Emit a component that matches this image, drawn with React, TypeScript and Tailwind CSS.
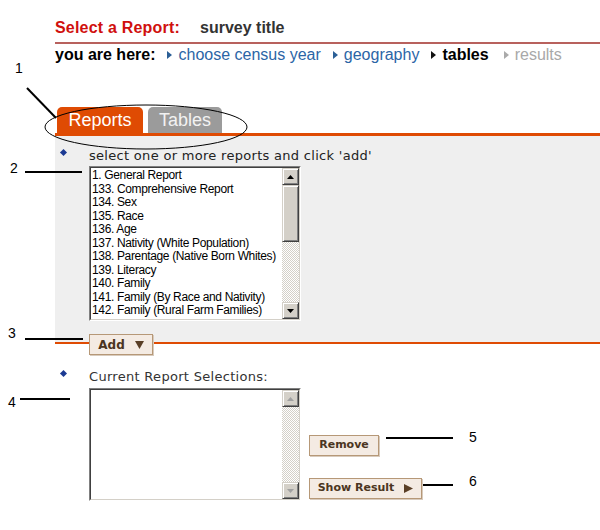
import React from 'react';

const reports = [
  '1. General Report',
  '133. Comprehensive Report',
  '134. Sex',
  '135. Race',
  '136. Age',
  '137. Nativity (White Population)',
  '138. Parentage (Native Born Whites)',
  '139. Literacy',
  '140. Family',
  '141. Family (By Race and Nativity)',
  '142. Family (Rural Farm Families)',
];

function ArrowButton({ dir, disabled }: { dir: 'up' | 'down'; disabled?: boolean }) {
  return (
    <div className="h-[17px] w-[17px] shrink-0 flex items-center justify-center bg-[#d4d0c8] border border-t-[#d4d0c8] border-l-[#d4d0c8] border-r-[#404040] border-b-[#404040] shadow-[inset_1px_1px_#ffffff,inset_-1px_-1px_#808080]">
      <svg width="7" height="4" viewBox="0 0 7 4">
        <path d={dir === 'up' ? 'M3.5 0L7 4H0Z' : 'M0 0H7L3.5 4Z'} fill={disabled ? '#a0a0a0' : '#000000'} />
      </svg>
    </div>
  );
}

function ScrollBar({ disabled }: { disabled?: boolean }) {
  return (
    <div className="w-[17px] h-full flex flex-col">
      <ArrowButton dir="up" disabled={disabled} />
      <div className="flex-1 bg-[image:repeating-conic-gradient(#d4d0c8_0_25%,#ffffff_0_50%)] bg-[length:2px_2px]">
        {!disabled && (
          <div className="h-[57px] w-[17px] bg-[#d4d0c8] border border-t-[#d4d0c8] border-l-[#d4d0c8] border-r-[#404040] border-b-[#404040] shadow-[inset_1px_1px_#ffffff,inset_-1px_-1px_#808080]" />
        )}
      </div>
      <ArrowButton dir="down" disabled={disabled} />
    </div>
  );
}

function ListBox({ items, height, disabled }: { items: string[]; height: string; disabled?: boolean }) {
  return (
    <div className={`w-[212px] ${height} border border-t-[#808080] border-l-[#808080] border-r-[#ffffff] border-b-[#ffffff]`}>
      <div className="w-full h-full flex border border-t-[#404040] border-l-[#404040] border-r-[#d4d0c8] border-b-[#d4d0c8] bg-white">
        <div className="flex-1 overflow-hidden pl-[1px] pt-[1px] font-['Liberation_Sans',Arial,sans-serif] text-[12px] leading-[13.5px] tracking-[-0.35px] text-black">
          {items.map((r) => (
            <div key={r} className="whitespace-nowrap">{r}</div>
          ))}
        </div>
        <ScrollBar disabled={disabled} />
      </div>
    </div>
  );
}

function Crumb({ color, wide }: { color: string; wide?: boolean }) {
  return (
    <svg width="5" height="8" viewBox="0 0 5 8" className={`mr-[6px] ${wide ? 'ml-[15px]' : 'ml-[12px]'}`}>
      <path d="M0 0L5 4L0 8Z" fill={color} />
    </svg>
  );
}

function Bullet() {
  return <div className="w-[5px] h-[5px] rotate-45 bg-[#1b3a93]" />;
}

function BrownButton({ children, width }: { children: React.ReactNode; width: string }) {
  return (
    <div className={`${width} h-[21px] flex items-center justify-center gap-[10px] bg-[#f4ebe3] border border-[#b69877] shadow-[1px_1px_0_#d8cbbd] font-['DejaVu_Sans',Verdana,sans-serif] font-bold text-[11px] text-[#4b3521]`}>
      {children}
    </div>
  );
}

function Callout({ n, numX, numY, x1, x2, y }: { n: string; numX: number; numY: number; x1: number; x2: number; y: number }) {
  return (
    <>
      <div className="absolute h-[2px] bg-black" style={{ left: x1, top: y, width: x2 - x1 }} />
      <div className="absolute text-[14px] leading-none text-black" style={{ left: numX, top: numY }}>{n}</div>
    </>
  );
}

export default function App() {
  return (
    <div className="relative w-[600px] h-[530px] bg-white overflow-hidden font-['Liberation_Sans',Arial,sans-serif]">
      <div className="pl-[55px] pt-[18px]">
        <div className="flex items-baseline border-b-2 border-[#b8615d] pb-[5px] text-[16px] leading-[19px] font-bold">
          <span className="text-[#d0100e] tracking-[0.2px]">Select a Report:</span>
          <span className="ml-[20px] text-[#333333]">survey title</span>
        </div>
        <div className="flex items-center mt-[1px] text-[16px] leading-[19px]">
          <span className="font-bold text-black">you are here:</span>
          <Crumb color="#2b5f96" />
          <span className="text-[#2b65a6]">choose census year</span>
          <Crumb color="#2b5f96" />
          <span className="text-[#2b65a6]">geography</span>
          <Crumb color="#111111" />
          <span className="font-bold text-black">tables</span>
          <Crumb color="#aaaaaa" wide />
          <span className="text-[#a8a8a8]">results</span>
        </div>

        <div className="flex items-end gap-[5px] pl-[2px] mt-[43px]">
          <div className="h-[26px] w-[86px] rounded-t-[5px] bg-[#df4b03] flex items-center justify-center text-[18px] text-white">Reports</div>
          <div className="h-[26px] w-[74px] rounded-t-[5px] bg-[#9b9b9b] flex items-center justify-center text-[18px] text-[#f2f2f2]">Tables</div>
        </div>
        <div className="h-[3px] bg-[#df4b03]" />

        <div className="bg-[#efefef] border-b-2 border-[#df4b03] pb-[21px]">
          <div className="flex items-center h-[30px] pt-[10px]">
            <div className="w-[34px] flex justify-start pl-[6px] -mt-[8px]"><Bullet /></div>
            <span className="font-['DejaVu_Sans',Verdana,sans-serif] text-[13px] tracking-[0.3px] text-[#222222]">select one or more reports and click 'add'</span>
          </div>
          <div className="pl-[34px]">
            <ListBox items={reports} height="h-[155px]" />
          </div>
        </div>
        <div className="pl-[34px] -mt-[10px]">
          <BrownButton width="w-[64px]">
            <span className="text-[12px]">Add</span>
            <svg width="9" height="9" viewBox="0 0 9 9"><path d="M0 1H9L4.5 9Z" fill="#5a3f26" /></svg>
          </BrownButton>
        </div>

        <div className="flex items-center mt-[14px] h-[16px]">
          <div className="w-[34px] flex justify-start pl-[6px] -mt-[8px]"><Bullet /></div>
          <span className="font-['DejaVu_Sans',Verdana,sans-serif] text-[13px] tracking-[0.3px] text-[#333333]">Current Report Selections:</span>
        </div>
        <div className="flex items-end gap-[8px] pl-[34px] mt-[3px]">
          <ListBox items={[]} height="h-[113px]" disabled />
          <div className="flex flex-col gap-[22px] mb-[2px]">
            <BrownButton width="w-[70px]">Remove</BrownButton>
            <BrownButton width="w-[113px]">
              <span>Show Result</span>
              <svg width="9" height="9" viewBox="0 0 9 9"><path d="M0 0L9 4.5L0 9Z" fill="#5a3f26" /></svg>
            </BrownButton>
          </div>
        </div>
      </div>

      {/* annotation callouts */}
      <svg className="absolute left-0 top-0" width="600" height="530" viewBox="0 0 600 530" fill="none">
        <path d="M27 88L56 118" stroke="#000" strokeWidth="2" />
        <ellipse cx="146" cy="127" rx="101" ry="22" stroke="#000" strokeWidth="1" />
      </svg>
      <div className="absolute left-[15px] top-[61px] text-[14px] leading-none text-black">1</div>
      <Callout n="2" numX={10} numY={161} x1={25} x2={82} y={171} />
      <Callout n="3" numX={8} numY={326} x1={25} x2={83} y={338} />
      <Callout n="4" numX={8} numY={395} x1={20} x2={70} y={398} />
      <Callout n="5" numX={469} numY={430} x1={386} x2={453} y={437} />
      <Callout n="6" numX={469} numY={474} x1={423} x2={453} y={484} />
    </div>
  );
}
